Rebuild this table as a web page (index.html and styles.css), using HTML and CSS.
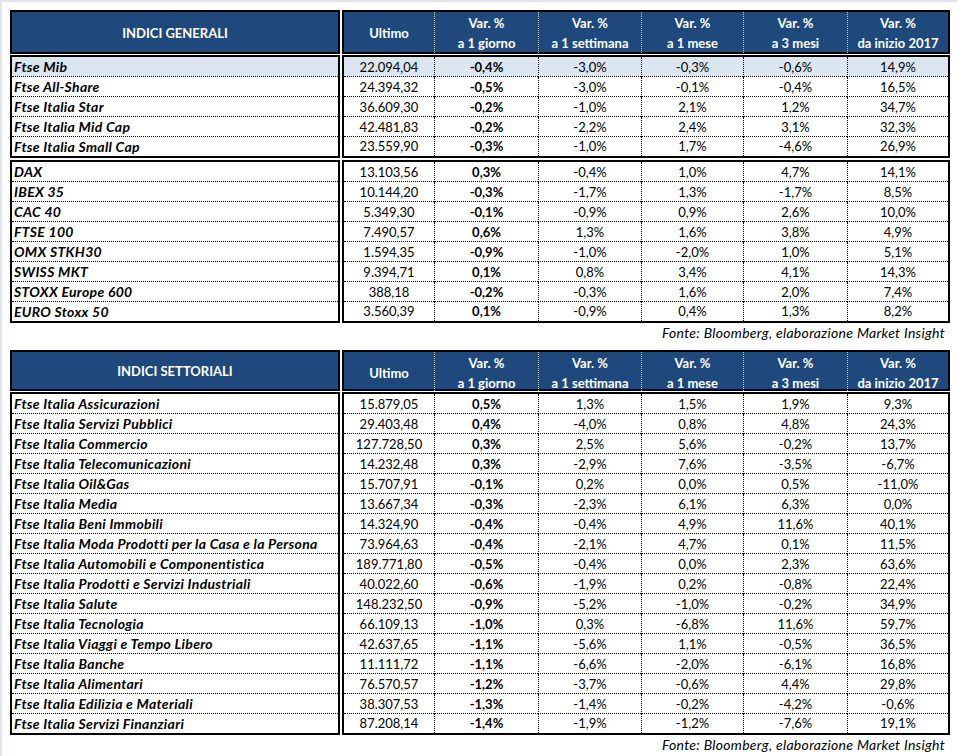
FILE: index.html
```html
<!DOCTYPE html>
<html lang="it">
<head>
<meta charset="utf-8">
<title>Indici</title>
<link rel="stylesheet" href="styles.css">
</head>
<body>
<div class="sheet">
  <div class="table">
    <div class="block head h1">
      <div class="namebox hname">INDICI GENERALI</div>
      <div class="databox hgrid">
        <div class="hc">Ultimo</div>
        <div class="hc">Var. %<br>a 1 giorno</div>
        <div class="hc">Var. %<br>a 1 settimana</div>
        <div class="hc">Var. %<br>a 1 mese</div>
        <div class="hc">Var. %<br>a 3 mesi</div>
        <div class="hc">Var. %<br>da inizio 2017</div>
      </div>
    </div>
    <div class="block group first">
      <div class="namebox names">
        <div class="hl">Ftse Mib</div>
        <div>Ftse All-Share</div>
        <div>Ftse Italia Star</div>
        <div>Ftse Italia Mid Cap</div>
        <div>Ftse Italia Small Cap</div>
      </div>
      <div class="databox grid">
        <span class="hl">22.094,04</span><span class="hl">-0,4%</span><span class="hl">-3,0%</span><span class="hl">-0,3%</span><span class="hl">-0,6%</span><span class="hl">14,9%</span>
        <span>24.394,32</span><span>-0,5%</span><span>-3,0%</span><span>-0,1%</span><span>-0,4%</span><span>16,5%</span>
        <span>36.609,30</span><span>-0,2%</span><span>-1,0%</span><span>2,1%</span><span>1,2%</span><span>34,7%</span>
        <span>42.481,83</span><span>-0,2%</span><span>-2,2%</span><span>2,4%</span><span>3,1%</span><span>32,3%</span>
        <span>23.559,90</span><span>-0,3%</span><span>-1,0%</span><span>1,7%</span><span>-4,6%</span><span>26,9%</span>
      </div>
    </div>
    <div class="block group next">
      <div class="namebox names">
        <div>DAX</div>
        <div>IBEX 35</div>
        <div>CAC 40</div>
        <div>FTSE 100</div>
        <div>OMX STKH30</div>
        <div>SWISS MKT</div>
        <div>STOXX Europe 600</div>
        <div>EURO Stoxx 50</div>
      </div>
      <div class="databox grid">
        <span>13.103,56</span><span>0,3%</span><span>-0,4%</span><span>1,0%</span><span>4,7%</span><span>14,1%</span>
        <span>10.144,20</span><span>-0,3%</span><span>-1,7%</span><span>1,3%</span><span>-1,7%</span><span>8,5%</span>
        <span>5.349,30</span><span>-0,1%</span><span>-0,9%</span><span>0,9%</span><span>2,6%</span><span>10,0%</span>
        <span>7.490,57</span><span>0,6%</span><span>1,3%</span><span>1,6%</span><span>3,8%</span><span>4,9%</span>
        <span>1.594,35</span><span>-0,9%</span><span>-1,0%</span><span>-2,0%</span><span>1,0%</span><span>5,1%</span>
        <span>9.394,71</span><span>0,1%</span><span>0,8%</span><span>3,4%</span><span>4,1%</span><span>14,3%</span>
        <span>388,18</span><span>-0,2%</span><span>-0,3%</span><span>1,6%</span><span>2,0%</span><span>7,4%</span>
        <span>3.560,39</span><span>0,1%</span><span>-0,9%</span><span>0,4%</span><span>1,3%</span><span>8,2%</span>
      </div>
    </div>
    <div class="source">Fonte: Bloomberg, elaborazione Market Insight</div>
  </div>

  <div class="table t2">
    <div class="block head h2">
      <div class="namebox hname">INDICI SETTORIALI</div>
      <div class="databox hgrid">
        <div class="hc">Ultimo</div>
        <div class="hc">Var. %<br>a 1 giorno</div>
        <div class="hc">Var. %<br>a 1 settimana</div>
        <div class="hc">Var. %<br>a 1 mese</div>
        <div class="hc">Var. %<br>a 3 mesi</div>
        <div class="hc">Var. %<br>da inizio 2017</div>
      </div>
    </div>
    <div class="block group first">
      <div class="namebox names">
        <div>Ftse Italia Assicurazioni</div>
        <div>Ftse Italia Servizi Pubblici</div>
        <div>Ftse Italia Commercio</div>
        <div>Ftse Italia Telecomunicazioni</div>
        <div>Ftse Italia Oil&amp;Gas</div>
        <div>Ftse Italia Media</div>
        <div>Ftse Italia Beni Immobili</div>
        <div>Ftse Italia Moda Prodotti per la Casa e la Persona</div>
        <div>Ftse Italia Automobili e Componentistica</div>
        <div>Ftse Italia Prodotti e Servizi Industriali</div>
        <div>Ftse Italia Salute</div>
        <div>Ftse Italia Tecnologia</div>
        <div>Ftse Italia Viaggi e Tempo Libero</div>
        <div>Ftse Italia Banche</div>
        <div>Ftse Italia Alimentari</div>
        <div>Ftse Italia Edilizia e Materiali</div>
        <div>Ftse Italia Servizi Finanziari</div>
      </div>
      <div class="databox grid">
        <span>15.879,05</span><span>0,5%</span><span>1,3%</span><span>1,5%</span><span>1,9%</span><span>9,3%</span>
        <span>29.403,48</span><span>0,4%</span><span>-4,0%</span><span>0,8%</span><span>4,8%</span><span>24,3%</span>
        <span>127.728,50</span><span>0,3%</span><span>2,5%</span><span>5,6%</span><span>-0,2%</span><span>13,7%</span>
        <span>14.232,48</span><span>0,3%</span><span>-2,9%</span><span>7,6%</span><span>-3,5%</span><span>-6,7%</span>
        <span>15.707,91</span><span>-0,1%</span><span>0,2%</span><span>0,0%</span><span>0,5%</span><span>-11,0%</span>
        <span>13.667,34</span><span>-0,3%</span><span>-2,3%</span><span>6,1%</span><span>6,3%</span><span>0,0%</span>
        <span>14.324,90</span><span>-0,4%</span><span>-0,4%</span><span>4,9%</span><span>11,6%</span><span>40,1%</span>
        <span>73.964,63</span><span>-0,4%</span><span>-2,1%</span><span>4,7%</span><span>0,1%</span><span>11,5%</span>
        <span>189.771,80</span><span>-0,5%</span><span>-0,4%</span><span>0,0%</span><span>2,3%</span><span>63,6%</span>
        <span>40.022,60</span><span>-0,6%</span><span>-1,9%</span><span>0,2%</span><span>-0,8%</span><span>22,4%</span>
        <span>148.232,50</span><span>-0,9%</span><span>-5,2%</span><span>-1,0%</span><span>-0,2%</span><span>34,9%</span>
        <span>66.109,13</span><span>-1,0%</span><span>0,3%</span><span>-6,8%</span><span>11,6%</span><span>59,7%</span>
        <span>42.637,65</span><span>-1,1%</span><span>-5,6%</span><span>1,1%</span><span>-0,5%</span><span>36,5%</span>
        <span>11.111,72</span><span>-1,1%</span><span>-6,6%</span><span>-2,0%</span><span>-6,1%</span><span>16,8%</span>
        <span>76.570,57</span><span>-1,2%</span><span>-3,7%</span><span>-0,6%</span><span>4,4%</span><span>29,8%</span>
        <span>38.307,53</span><span>-1,3%</span><span>-1,4%</span><span>-0,2%</span><span>-4,2%</span><span>-0,6%</span>
        <span>87.208,14</span><span>-1,4%</span><span>-1,9%</span><span>-1,2%</span><span>-7,6%</span><span>19,1%</span>
      </div>
    </div>
    <div class="source">Fonte: Bloomberg, elaborazione Market Insight</div>
  </div>
</div>
</body>
</html>
```

FILE: styles.css
```css
* { box-sizing: border-box; }

html, body {
  margin: 0;
  padding: 0;
  background: #ffffff;
}

body {
  font-family: Lato, "Liberation Sans", sans-serif;
  font-size: 13px;
  color: #000;
  width: 957px;
  height: 756px;
  overflow: hidden;
}

.sheet {
  height: 756px;
  border-top: 2px solid #dfe5ee;
  border-left: 2px solid #dfe5ee;
  padding: 8px 0 0 8px;
}

.table {
  width: 940px;
}

.t2 {
  margin-top: 7px;
}

.block {
  display: flex;
  gap: 2px;
}

.namebox {
  width: 330px;
  border: 2px solid #000;
  flex: none;
}

.databox {
  width: 608px;
  border: 2px solid #000;
  flex: none;
}

/* headers */
.head .namebox,
.head .databox {
  background: #1f497d;
  color: #fff;
  font-weight: bold;
}

.h1 { height: 44px; }
.h2 { height: 41px; }

.hname {
  display: flex;
  align-items: center;
  justify-content: center;
  padding-top: 1px;
}

.hgrid {
  display: grid;
  grid-template-columns: 90px 104px 103px 102px 104px 101px;
}

.hc {
  display: flex;
  align-items: center;
  justify-content: center;
  text-align: center;
  line-height: 20px;
  padding-top: 1px;
}

.hc + .hc {
  border-left: 1px dotted rgba(255, 255, 255, 0.75);
}

/* data groups */
.first { margin-top: 1px; }
.next { margin-top: 2px; }

.names > div {
  height: 20px;
  line-height: 20px;
  padding-left: 2px;
  border-bottom: 1px dotted #000;
  font-size: 14px;
  letter-spacing: 0.3px;
  font-weight: bold;
  font-style: italic;
  white-space: nowrap;
}

.names > div:last-child {
  border-bottom: none;
  height: 19px;
  line-height: 19px;
}

.grid {
  display: grid;
  grid-template-columns: 90px 104px 103px 102px 104px 101px;
}

.grid > span {
  height: 20px;
  line-height: 20px;
  text-align: center;
  border-bottom: 1px dotted #000;
}

.grid > span:not(:nth-child(6n+1)) {
  border-left: 1px dotted #000;
}

.grid > span:nth-child(6n+2) {
  font-weight: bold;
}

.grid > span:nth-last-child(-n+6) {
  border-bottom: none;
  height: 19px;
  line-height: 19px;
}

.hl {
  background: #dce6f1;
}

.source {
  height: 20px;
  line-height: 20px;
  text-align: right;
  padding-right: 5px;
  font-size: 14px;
  letter-spacing: 0.3px;
  font-style: italic;
}
```
